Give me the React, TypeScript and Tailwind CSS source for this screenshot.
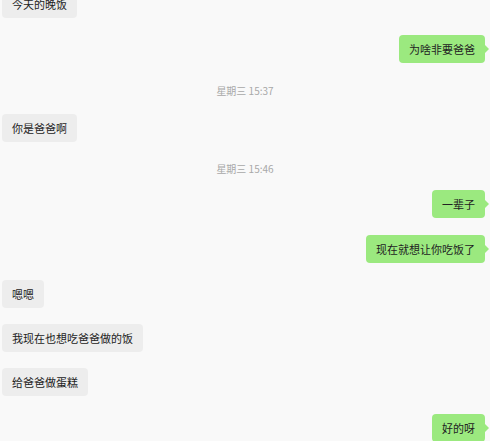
import React from 'react';

type Msg =
  | { kind: 'left' | 'right'; text: string; mt: string }
  | { kind: 'time'; text: string; mt: string };

const messages: Msg[] = [
  { kind: 'left', text: '今天的晚饭', mt: '-mt-[10px]' },
  { kind: 'right', text: '为啥非要爸爸', mt: 'mt-[17px]' },
  { kind: 'time', text: '星期三 15:37', mt: 'mt-[21px]' },
  { kind: 'left', text: '你是爸爸啊', mt: 'mt-[18px]' },
  { kind: 'time', text: '星期三 15:46', mt: 'mt-[20px]' },
  { kind: 'right', text: '一辈子', mt: 'mt-[16px]' },
  { kind: 'right', text: '现在就想让你吃饭了', mt: 'mt-[17px]' },
  { kind: 'left', text: '嗯嗯', mt: 'mt-[17px]' },
  { kind: 'left', text: '我现在也想吃爸爸做的饭', mt: 'mt-[16px]' },
  { kind: 'left', text: '给爸爸做蛋糕', mt: 'mt-[16px]' },
  { kind: 'right', text: '好的呀', mt: 'mt-[18px]' },
];

const Bubble: React.FC<{ side: 'left' | 'right'; text: string }> = ({ side, text }) => {
  if (side === 'left') {
    return (
      <div className="flex justify-start pl-[2px]">
        <div className="h-[28px] px-[10px] flex items-center rounded-[4px] bg-[#ededed] text-[#222] text-[11px]">
          {text}
        </div>
      </div>
    );
  }
  return (
    <div className="flex justify-end pr-[5px]">
      <div className="relative h-[28px] px-[10px] flex items-center rounded-[4px] bg-[#9be97f] text-[#222] text-[11px]">
        {text}
        <span className="absolute right-[-4px] top-[10px] w-0 h-0 border-y-[4px] border-y-transparent border-l-[4px] border-l-[#9be97f]" />
      </div>
    </div>
  );
};

export default function App() {
  return (
    <div
      className="w-[490px] h-[441px] overflow-hidden bg-[#f9f9f9]"
      style={{ fontFamily: '"Noto Sans CJK SC", "Noto Sans", sans-serif' }}
    >
      <div className="flex flex-col">
        {messages.map((m, i) => (
          <div key={i} className={m.mt}>
            {m.kind === 'time' ? (
              <div className="h-[12px] flex items-center justify-center text-[10px] text-[#a8a8a8]">
                {m.text}
              </div>
            ) : (
              <Bubble side={m.kind} text={m.text} />
            )}
          </div>
        ))}
      </div>
    </div>
  );
}
